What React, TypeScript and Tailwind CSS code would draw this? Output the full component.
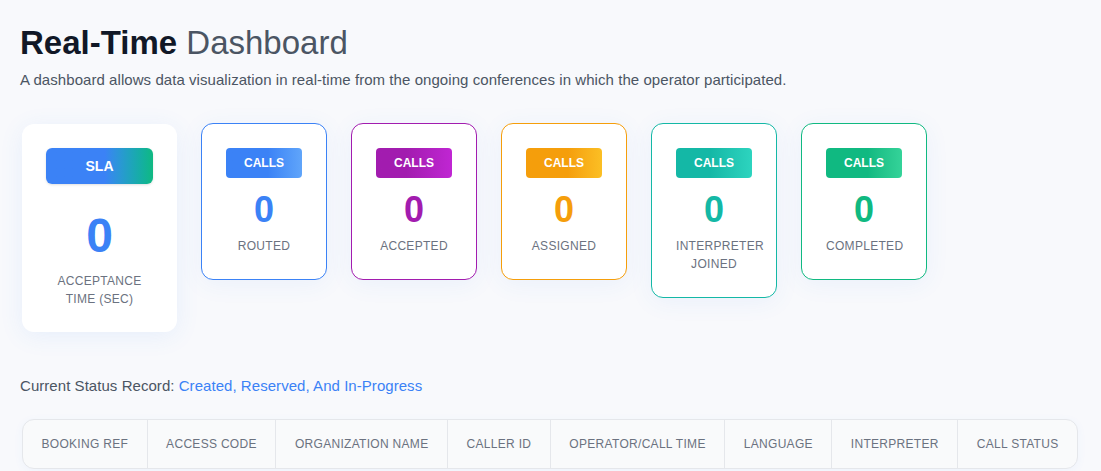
import React from 'react';

type CallCard = {
  label: string;
  badge: string;
  number: string;
  border: string;
};

const callCards: CallCard[] = [
  {
    label: 'Routed',
    badge: 'bg-linear-to-r from-[#3b82f6] from-55% to-[#60a5fa]',
    number: 'text-[#3b82f6]',
    border: 'border-[#3b82f6]',
  },
  {
    label: 'Accepted',
    badge: 'bg-linear-to-r from-[#a21caf] from-40% to-[#c026d3]',
    number: 'text-[#a21caf]',
    border: 'border-[#a21caf]',
  },
  {
    label: 'Assigned',
    badge: 'bg-linear-to-r from-[#f59e0b] from-55% to-[#fbbf24]',
    number: 'text-[#f59e0b]',
    border: 'border-[#f59e0b]',
  },
  {
    label: 'Interpreter Joined',
    badge: 'bg-linear-to-r from-[#14b8a6] from-45% to-[#2dd4bf]',
    number: 'text-[#14b8a6]',
    border: 'border-[#14b8a6]',
  },
  {
    label: 'Completed',
    badge: 'bg-linear-to-r from-[#10b981] from-55% to-[#34d399]',
    number: 'text-[#10b981]',
    border: 'border-[#10b981]',
  },
];

const columns = [
  'Booking Ref',
  'Access Code',
  'Organization Name',
  'Caller ID',
  'Operator/Call Time',
  'Language',
  'Interpreter',
  'Call Status',
];

const SlaCard: React.FC = () => (
  <div className="mt-px w-[155px] shrink-0 rounded-xl bg-white p-6 text-center shadow-[0_4px_24px_rgba(59,130,246,0.09)]">
    <div className="flex h-9 items-center justify-center rounded-md bg-linear-to-r from-[#3b82f6] from-55% to-[#10b981] text-sm font-bold text-white shadow-sm">
      SLA
    </div>
    <div className="mt-7 text-5xl leading-none font-bold text-[#3b82f6]">0</div>
    <div className="mt-3 text-xs leading-[18px] tracking-wide text-[#6b7280] uppercase">
      Acceptance Time (Sec)
    </div>
  </div>
);

const StatCard: React.FC<{ card: CallCard }> = ({ card }) => (
  <div
    className={`w-[126px] shrink-0 rounded-xl border bg-white p-6 text-center shadow-[0_4px_24px_rgba(59,130,246,0.07)] ${card.border}`}
  >
    <div
      className={`flex h-[30px] items-center justify-center rounded text-xs font-bold text-white ${card.badge}`}
    >
      CALLS
    </div>
    <div className={`mt-3 text-4xl leading-10 font-bold ${card.number}`}>0</div>
    <div className="mt-[7px] text-xs leading-[18px] tracking-wide text-[#6b7280] uppercase">
      {card.label}
    </div>
  </div>
);

export default function App() {
  return (
    <div
      className="min-h-screen bg-[#f8f9fc] px-5 pt-[26px]"
      style={{ fontFamily: '"Liberation Sans", Arial, sans-serif' }}
    >
      <h1 className="text-[33px] leading-none text-[#111827]">
        <span className="font-bold">Real-Time</span>{' '}
        <span className="font-normal text-[#4b5563]">Dashboard</span>
      </h1>
      <p className="mt-[11px] text-[15px] leading-5 tracking-[0.06px] text-[#4b5563]">
        A dashboard allows data visualization in real-time from the ongoing conferences in which the operator
        participated.
      </p>

      <div className="mt-[33px] ml-0.5 flex items-start gap-6">
        <SlaCard />
        {callCards.map((card) => (
          <StatCard key={card.label} card={card} />
        ))}
      </div>

      <p className="mt-11 text-[15px] leading-5 tracking-[0.05px] text-[#4b5563]">
        Current Status Record: <span className="text-[#3b82f6]">Created, Reserved, And In-Progress</span>
      </p>

      <div className="mt-[23px] ml-0.5 w-[1056px] overflow-hidden rounded-xl border border-gray-200 bg-[#f9fafb] shadow-[0_2px_10px_rgba(59,130,246,0.05)]">
        <table className="w-full border-collapse">
          <thead>
            <tr>
              {columns.map((col, i) => (
                <th
                  key={col}
                  className={`px-[18px] py-4 text-center text-xs leading-4 font-normal tracking-wide whitespace-nowrap text-[#6b7280] uppercase ${
                    i < columns.length - 1 ? 'border-r border-gray-200' : ''
                  }`}
                >
                  {col}
                </th>
              ))}
            </tr>
          </thead>
        </table>
      </div>
    </div>
  );
}
